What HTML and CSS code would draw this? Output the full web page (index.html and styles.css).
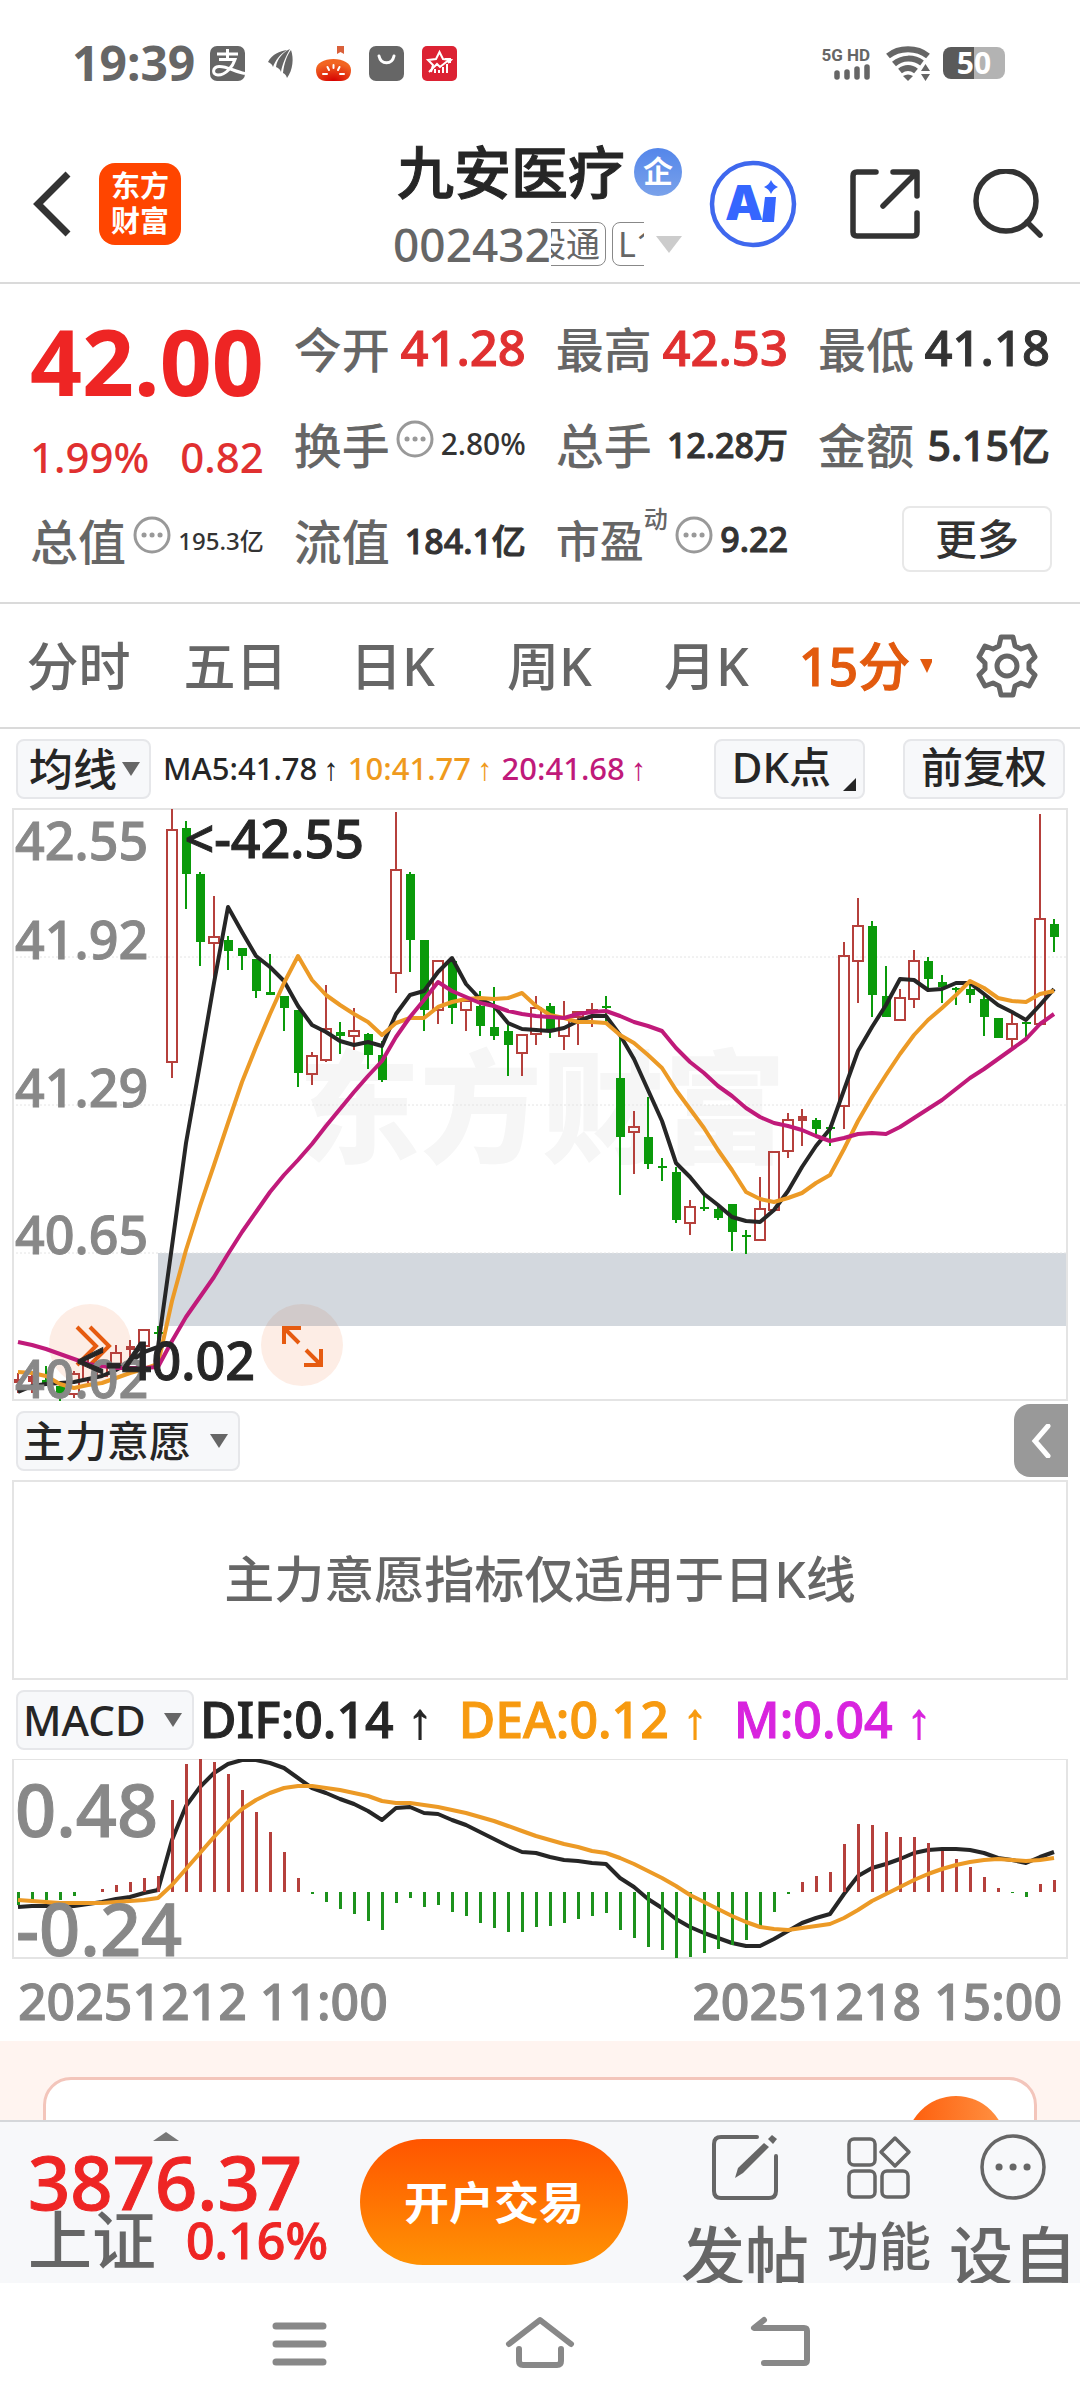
FILE: index.html
```html
<!DOCTYPE html>
<html lang="zh-CN">
<head>
<meta charset="utf-8">
<meta name="viewport" content="width=device-width, initial-scale=1">
<title>九安医疗 002432</title>
<link rel="stylesheet" href="styles.css">
</head>
<body>
<div class="status">
  <span class="clock">19:39</span>
  <svg class="s35" viewBox="0 0 35 35"><rect width="35" height="35" rx="7" fill="#666"/><path d="M7 8H28M17.500 3V13M9 13.500H25C23 20 16 29 8 29C2 29 2 21 9 20.500C17 20 25 26 35 27.500" fill="none" stroke="#fff" stroke-width="3"/></svg>
  <svg class="leaf" viewBox="0 0 26 35"><path d="M0 16C4 8 12 5 19 4C12 8 7 15 5 21C4 18 2 17 0 16ZM8 21C9 13 15 6 22 3C18 10 14 19 13 26C12 23 10 22 8 21ZM15 27C16 18 19 9 23 4C26 12 25 24 19 32C18 29 17 28 15 27Z" fill="#666"/></svg>
  <svg class="s35" viewBox="0 0 35 35"><defs><radialGradient id="pumpkin" cx=".5" cy="1" r=".8"><stop offset="0" stop-color="#d60000"/><stop offset="1" stop-color="#f26522"/></radialGradient></defs><path d="M21 0H28V8L24.500 6L21 8Z" fill="#d9603a"/><path d="M0 24C0 17 8 13 17.500 13S35 17 35 24C35 31 31 35 25 35H10C4 35 0 31 0 24Z" fill="url(#pumpkin)"/><path d="M17.500 19V22M11.500 21L13 24M23.500 21L22 24M7 28H11M28 28H24" stroke="#fff" stroke-width="2" stroke-linecap="round"/></svg>
  <svg class="s35" viewBox="0 0 35 35"><rect width="35" height="35" rx="7" fill="#666"/><path d="M10 10C12 19 23 19 25 10" fill="none" stroke="#fff" stroke-width="3" stroke-linecap="round"/></svg>
  <svg class="s35" viewBox="0 0 35 35"><rect width="35" height="35" rx="5" fill="#dc2233"/><path d="M9 26L11 19L6 14L14 13L17.500 6L21 13L29 14L26 17" fill="none" stroke="#fff" stroke-width="2"/><path d="M7 26L15 18L18 21L28 13M23 13H28V17M13 27V23M17 27V24M21 27V21M25 27V18" fill="none" stroke="#fff" stroke-width="2"/></svg>
  <span class="spacer"></span>
  <span class="signal"><b>5G HD</b><svg viewBox="0 0 36 16"><path d="M3 9V13M13 8V13M23 5V13M33 3V13" stroke="#666" stroke-width="5.500" stroke-linecap="round"/></svg></span>
  <svg class="wifi" viewBox="0 0 44 35"><g fill="none" stroke="#666" stroke-width="6"><path d="M2 10C13 1 31 1 42 10"/><path d="M8 18C16 11 28 11 36 17"/><path d="M14 25C19 21 25 21 30 25"/></g><path d="M17 30Q22 27 27 30L22 35Z" fill="#666"/><path d="M35 25L39.500 18L44 25ZM35 28H44L39.500 35Z" fill="#666"/></svg>
  <span class="battery">50</span>
</div>

<header class="head">
  <div class="head-left">
    <a href="#back" aria-label="返回"><svg class="back" viewBox="0 0 38 66"><path d="M35 3L5 33L35 63" fill="none" stroke="#333" stroke-width="7"/></svg></a>
    <a href="#home" class="brand">东方<br>财富</a>
  </div>
  <div class="title">
    <h1>九安医疗<span class="corp">企</span></h1>
    <div class="code"><span>002432</span><span class="tags"><span class="tag first">股通</span><span class="tag">L1</span></span><svg class="down" viewBox="0 0 26 17"><path d="M0 0H26L13 17Z" fill="#ccc"/></svg></div>
  </div>
  <div class="head-right">
    <button aria-label="Ai"><svg class="ai" viewBox="0 0 88 88"><circle cx="44" cy="44" r="41" fill="none" stroke="#3f68ee" stroke-width="4.500"/><text x="16" y="60" class="ai-text">A</text><path d="M56 37H67L65 62H53Z" fill="#3566ff"/><path d="M62 20Q64 25 69 27Q64 29 62 34Q60 29 55 27Q60 25 62 20Z" fill="#3566ff"/></svg></button>
    <button aria-label="分享"><svg class="share" viewBox="0 0 70 70"><path d="M26 3H7Q3 3 3 7V63Q3 67 7 67H63Q67 67 67 63V44M43 3H67V27M65 5L33 37" fill="none" stroke="#333" stroke-width="5.500" stroke-linecap="round" stroke-linejoin="round"/></svg></button>
    <button aria-label="搜索"><svg class="share" viewBox="0 0 70 70"><circle cx="33" cy="32" r="30" fill="none" stroke="#333" stroke-width="5.500"/><path d="M54 53L67 66" stroke="#333" stroke-width="5.500" stroke-linecap="round"/></svg></button>
  </div>
</header>

<section class="quote">
  <div class="last"><strong>42.00</strong><p><span>1.99%</span><span>0.82</span></p></div>
  <div class="cell"><span class="lab">今开</span><span class="v48 up">41.28</span></div>
  <div class="cell"><span class="lab">最高</span><span class="v48 up">42.53</span></div>
  <div class="cell"><span class="lab">最低</span><span class="v48">41.18</span></div>
  <div class="cell"><span class="lab">换手</span><svg class="dots" viewBox="0 0 38 38"><circle cx="19" cy="19" r="17" fill="none" stroke="#999" stroke-width="3"/><path d="M11 19h.1M19 19h.1M27 19h.1" stroke="#999" stroke-width="5" stroke-linecap="round"/></svg><span class="v30">2.80%</span></div>
  <div class="cell"><span class="lab">总手</span><span class="v34">12.28万</span></div>
  <div class="cell"><span class="lab">金额</span><span class="v40">5.15亿</span></div>
  <div class="cell"><span class="lab">总值</span><svg class="dots" viewBox="0 0 38 38"><circle cx="19" cy="19" r="17" fill="none" stroke="#999" stroke-width="3"/><path d="M11 19h.1M19 19h.1M27 19h.1" stroke="#999" stroke-width="5" stroke-linecap="round"/></svg><span class="v24">195.3亿</span></div>
  <div class="cell"><span class="lab">流值</span><span class="v34">184.1亿</span></div>
  <div class="cell"><span class="lab small">市盈<sup>动</sup></span><svg class="dots" viewBox="0 0 38 38"><circle cx="19" cy="19" r="17" fill="none" stroke="#999" stroke-width="3"/><path d="M11 19h.1M19 19h.1M27 19h.1" stroke="#999" stroke-width="5" stroke-linecap="round"/></svg><span class="v34">9.22</span></div>
  <div class="cell end"><button class="more">更多</button></div>
</section>

<nav class="periods">
  <a href="#m1">分时</a><a href="#d5">五日</a><a href="#day">日K</a><a href="#week">周K</a><a href="#month">月K</a>
  <a href="#m15" class="on">15分<svg viewBox="0 0 12 14"><path d="M0 0H12V3L7 14Z" fill="#e25a0e"/></svg></a>
  <button aria-label="设置"><svg class="gear" viewBox="-32 -32 64 64"><path d="M-8-20L-6-29H6L8-20L14-17L22-20L28-9L22-3V3L28 9L22 20L14 17L8 20L6 29H-6L-8 20L-14 17L-22 20L-28 9L-22 3V-3L-28-9L-22-20L-14-17Z" fill="none" stroke="#666" stroke-width="5" stroke-linejoin="round"/><circle r="10" fill="none" stroke="#666" stroke-width="5"/></svg></button>
</nav>

<div class="tools">
  <label class="pick tight"><select aria-label="主图指标"><option>均线</option></select><svg viewBox="0 0 18 14"><path d="M0 0H18L9 14Z"/></svg></label>
  <div class="ma"><span>MA5:41.78<i>↑</i></span><span class="c10">10:41.77<i>↑</i></span><span class="c20">20:41.68<i>↑</i></span></div>
  <button class="pill dk">DK点<svg viewBox="0 0 13 13"><path d="M13 0V13H0Z" fill="#262626"/></svg></button>
  <button class="pill">前复权</button>
</div>

<div class="chart">
  <svg id="kline" viewBox="12 807 1056 593" role="img" aria-label="15分钟K线"></svg>
  <button class="float f1" aria-label="展开"><svg viewBox="0 0 82 82"><path d="M28 23L47 42L28 61M41 23L60 42L41 61" fill="none" stroke="#e65b10" stroke-width="4"/></svg></button>
  <button class="float f2" aria-label="全屏"><svg viewBox="0 0 82 82"><path d="M23 40V24H40M24 25L38 39M43 61H60V45M59 60L45 46" fill="none" stroke="#e65b10" stroke-width="4"/></svg></button>
</div>

<div class="sub">
  <label class="pick"><select aria-label="副图指标一"><option>主力意愿</option></select><svg viewBox="0 0 18 14"><path d="M0 0H18L9 14Z"/></svg></label>
  <button class="fold" aria-label="收起"><svg viewBox="0 0 20 34"><path d="M17 2L4 17L17 32" fill="none" stroke="#fff" stroke-width="5" stroke-linecap="round"/></svg></button>
</div>
<p class="notice">主力意愿指标仅适用于日K线</p>

<div class="sub">
  <label class="pick"><select aria-label="副图指标二"><option>MACD</option></select><svg viewBox="0 0 18 14"><path d="M0 0H18L9 14Z"/></svg></label>
  <div class="macd"><span>DIF:0.14<i>↑</i></span><span class="dea">DEA:0.12<i>↑</i></span><span class="m">M:0.04<i>↑</i></span></div>
</div>
<div class="chart"><svg id="macd" viewBox="12 1758 1056 200" role="img" aria-label="MACD"></svg></div>
<div class="dates"><time>20251212 11:00</time><time>20251218 15:00</time></div>

<div class="promo"><div class="card"><span class="orb"></span></div></div>

<footer class="bar">
  <a href="#index" class="index"><svg viewBox="0 0 26 9"><path d="M0 9L13 0L26 9Z" fill="#777"/></svg><b>3876.37</b><span><em>上证</em>0.16%</span></a>
  <button class="trade">开户交易</button>
  <div class="acts">
    <a href="#post"><svg viewBox="0 0 66 66"><path d="M45 3H9Q2 3 2 10V57Q2 64 9 64H57Q64 64 64 57V22" fill="none" stroke="#666" stroke-width="4" stroke-linecap="round"/><path d="M23 44L26 34L52 9L57 13L31 39Z" fill="#666"/><path d="M56 5L60 1L65 5L61 10Z" fill="#666"/></svg>发帖</a>
    <a href="#tools" class="mid"><svg viewBox="0 0 66 66"><g fill="none" stroke="#666" stroke-width="3.500"><rect x="3" y="5" width="26" height="26" rx="5"/><rect x="3" y="37" width="26" height="26" rx="5"/><rect x="36" y="37" width="26" height="26" rx="5"/><path d="M49 4L63 18L49 32L35 18Z" stroke-linejoin="round"/></g></svg>功能</a>
    <a href="#fav"><svg viewBox="0 0 66 66"><circle cx="33" cy="33" r="31" fill="none" stroke="#666" stroke-width="3.500"/><path d="M19 33h.1M33 33h.1M47 33h.1" stroke="#666" stroke-width="7" stroke-linecap="round"/></svg>设自</a>
  </div>
</footer>
<nav class="keys">
  <button aria-label="任务"><svg viewBox="0 0 70 56"><path d="M11 11H58M11 29H58M11 47H58" stroke="#888" stroke-width="7" stroke-linecap="round"/></svg></button>
  <button aria-label="主页"><svg viewBox="0 0 70 56"><path d="M4 29L35 5L66 29M14 34V46Q14 50 18 50H52Q56 50 56 46V34" fill="none" stroke="#888" stroke-width="6" stroke-linecap="round" stroke-linejoin="round"/></svg></button>
  <button aria-label="后退"><svg viewBox="0 0 70 56"><path d="M19 5L9 13H59Q62 13 62 16V45Q62 48 59 48H19" fill="none" stroke="#888" stroke-width="6" stroke-linecap="round" stroke-linejoin="round"/></svg></button>
</nav>
<script src="charts.js"></script>
</body>
</html>
```
FILE: styles.css
```css
* { box-sizing: border-box; }
body { margin: 0; background: #fff; color: #262626; font-family: "Noto Sans", "Noto Sans CJK SC", sans-serif; font-weight: 500; }
a { color: inherit; text-decoration: none; }
button, select { font: inherit; color: inherit; background: none; border: 0; padding: 0; margin: 0; }
h1, p { margin: 0; font-weight: inherit; }
svg { display: block; flex: none; }
i, em { font-style: normal; }

/* medium weight for the large figures */
.title h1, .v48, .v40, .v34, .on, .macd, .dates, .index, .axis, .mark { -webkit-text-stroke: 1px; }

.status { display: flex; align-items: center; height: 126px; padding: 0 72px; color: #666; }
.clock { font-size: 48px; font-weight: 700; line-height: 48px; margin-right: 15px; }
.s35 { width: 35px; height: 35px; margin-right: 18px; }
.leaf { width: 26px; height: 35px; margin: 0 22px 0 5px; }
.spacer { flex: 1; }
.signal { display: flex; flex-direction: column; align-items: flex-end; margin-right: 16px; }
.signal b { font-family: "Roboto", sans-serif; font-size: 17px; line-height: 18px; }
.signal svg { width: 36px; height: 16px; }
.wifi { width: 44px; height: 35px; margin-right: 13px; }
.battery { width: 62px; height: 32px; margin-right: 3px; border-radius: 8px; background: linear-gradient(90deg, #5a5a5a 50%, #b3b3b3 50%); color: #fff; font-size: 30px; font-weight: 700; line-height: 32px; text-align: center; }

.head { display: grid; grid-template-columns: 1fr auto 1fr; align-items: center; height: 158px; padding-right: 5px; border-bottom: 2px solid #dadada; }
.head-left { display: flex; align-items: center; gap: 28px; padding-left: 33px; }
.back { width: 38px; height: 66px; }
.brand { width: 82px; height: 82px; padding-top: 5px; border-radius: 16px; background: #ff4500; color: #fff; font-size: 29px; font-weight: 700; line-height: 35px; text-align: center; }
.title { display: flex; flex-direction: column; gap: 12px; align-items: center; padding-bottom: 4px; }
.title h1 { display: flex; align-items: center; gap: 9px; font-size: 57px; line-height: 72px; padding-left: 4px; }
.corp { width: 48px; height: 48px; border-radius: 50%; background: linear-gradient(#5486ea, #7aa2ea); color: #fff; font-size: 30px; font-weight: 700; line-height: 46px; text-align: center; -webkit-text-stroke: 0; }
.code { display: flex; align-items: center; font-size: 46px; line-height: 48px; color: #666; }
.tags { display: flex; gap: 6px; width: 93px; overflow: hidden; }
.tag { flex: none; height: 44px; padding: 0 5px; border: 1px solid #888; border-radius: 8px; font-size: 34px; font-weight: 400; line-height: 42px; }
.tag.first { margin-left: -25px; }
.down { width: 26px; height: 17px; margin-left: 12px; }
.head-right { display: flex; align-items: center; justify-content: flex-end; gap: 53px; padding-right: 32px; }
.ai { width: 88px; height: 88px; }
.ai-text { font-family: "Inter", sans-serif; font-size: 48px; font-weight: 900; fill: #3566ff; }
.share { width: 70px; height: 70px; }

.quote { display: grid; grid-template-columns: repeat(4, 1fr); grid-auto-rows: 96px; column-gap: 30px; padding: 15px 30px 15px; border-bottom: 2px solid #dadada; color: #333; }
.last { grid-row: span 2; padding-top: 14px; color: #ee2524; }
.last strong { display: block; font-size: 91px; line-height: 96px; font-weight: 700; }
.last p { display: flex; justify-content: space-between; margin-top: 16px; font-size: 42px; line-height: 64px; color: #e03030; }
.cell { display: flex; align-items: center; justify-content: space-between; white-space: nowrap; }
.cell.end { justify-content: flex-end; margin-right: -2px; }
.lab { font-size: 48px; color: #666; }
.lab.small { display: flex; font-size: 44px; }
.lab sup { font-size: 24px; line-height: 24px; vertical-align: top; }
.dots { width: 38px; height: 38px; margin-bottom: 8px; }
.up { color: #e03030; }
.v48 { font-size: 49px; }
.v40 { font-size: 41px; }
.v34 { font-size: 34px; }
.v30 { font-size: 30px; }
.v24 { font-size: 24px; }
.more { width: 150px; height: 66px; border: 2px solid #e8e8e8; border-radius: 8px; font-size: 42px; line-height: 60px; }

.periods { display: grid; grid-template-columns: repeat(6, 1fr) 130px; align-items: center; justify-items: center; height: 125px; padding-right: 8px; border-bottom: 2px solid #dadada; color: #666; font-size: 52px; line-height: 64px; }
.periods .on { display: flex; align-items: center; gap: 10px; padding-left: 4px; color: #e25a0e; }
.periods .on svg { width: 12px; height: 14px; }
.gear { width: 64px; height: 64px; }

.tools { display: flex; align-items: center; height: 79px; padding: 0 15px 0 16px; }
.pick, .pill { display: flex; align-items: center; height: 60px; border: 2px solid #e6e7ea; border-radius: 8px; background: #f7f8fa; font-size: 42px; }
.pick { gap: 18px; padding: 0 10px 0 5px; }
.pick.tight { gap: 5px; padding: 0 9px 0 11px; font-size: 44px; }
.pick select { appearance: none; line-height: 56px; height: 56px; }
.pick svg { width: 18px; height: 14px; fill: #666; }
.pill { padding: 0 16px 4px; line-height: 52px; }
.pill.dk { gap: 12px; margin-left: auto; margin-right: 38px; padding: 0 7px 4px 16px; }
.pill.dk svg { width: 13px; height: 13px; align-self: flex-end; margin-bottom: 2px; }
.ma, .macd { display: flex; white-space: nowrap; }
.ma { gap: 9px; margin-left: 12px; font-size: 31px; line-height: 40px; }
.ma i, .macd i { font-family: "Liberation Sans", sans-serif; font-weight: 700; }
.ma i { margin-left: 6px; }
.c10 { color: #ef9a1d; }
.c20 { color: #c01a7a; }

.chart { position: relative; margin: 0 12px; }
.chart > svg { position: relative; z-index: 1; width: 100%; pointer-events: none; }
.float { position: absolute; bottom: 15px; width: 82px; height: 82px; border-radius: 50%; background: rgba(240, 110, 40, .12); }
.f1 { left: 37px; }
.f2 { left: 249px; }
.axis { font-size: 52px; fill: #888; stroke: #888; }
.mark { font-size: 52px; fill: #262626; stroke: #262626; }
.axis.big { font-size: 72px; }
.water { font-size: 122px; font-weight: 900; fill: #f6f6f6; }

.sub { display: flex; align-items: center; height: 79px; padding-left: 16px; }
.fold { display: flex; align-items: center; justify-content: center; width: 54px; height: 73px; margin-left: auto; margin-right: 12px; border-radius: 16px 0 0 16px; background: #999; }
.fold svg { width: 20px; height: 34px; }
.notice { margin: 0 12px; height: 200px; border: 2px solid #e4e4e4; color: #666; font-size: 50px; line-height: 194px; text-align: center; }
.macd { gap: 26px; margin-left: 6px; font-size: 50px; line-height: 60px; }
.macd i { margin-left: 14px; }
.dea { color: #f79a10; }
.m { color: #d824de; }
.dates { display: flex; justify-content: space-between; height: 82px; padding: 0 18px; color: #888; font-size: 50px; line-height: 84px; }

.promo { height: 79px; padding: 36px 43px 0; overflow: hidden; background: #fff4f0; }
.card { display: flex; justify-content: flex-end; height: 160px; padding: 16px 28px; border: 3px solid #f3c5bb; border-radius: 28px; background: #fff; }
.orb { width: 100px; height: 100px; border-radius: 50%; background: linear-gradient(90deg, #fe5c0a, #ff9344); }

.bar { display: flex; height: 163px; padding-left: 28px; overflow: hidden; border-top: 2px solid #d5d7da; background: #f7f8fa; }
.index { display: flex; flex-direction: column; width: 298px; margin-right: 34px; color: #ee2524; }
.index svg { width: 26px; height: 9px; margin: 10px 0 8px 125px; }
.index b { font-size: 74px; font-weight: 500; line-height: 66px; }
.index span { display: flex; align-items: center; gap: 30px; font-size: 50px; line-height: 50px; white-space: nowrap; }
.index em { font-size: 64px; color: #666; -webkit-text-stroke: 0; }
.trade { width: 268px; height: 126px; margin-top: 17px; border-radius: 63px; background: linear-gradient(#ff5500, #ff9204); color: #fff; font-size: 45px; font-weight: 700; padding-bottom: 4px; }
.acts { display: grid; grid-template-columns: repeat(3, 134px); margin-left: auto; color: #666; font-size: 64px; line-height: 84px; white-space: nowrap; }
.acts a { display: flex; flex-direction: column; align-items: center; }
.acts svg { width: 66px; height: 66px; margin: 12px 0 14px; }
.acts .mid { font-size: 52px; line-height: 64px; }
.keys { display: flex; justify-content: center; gap: 170px; height: 126px; padding-top: 32px; align-items: flex-start; }
.keys svg { width: 70px; height: 56px; }
```
FILE: charts.js
```js
const NS = "http://www.w3.org/2000/svg";
const x = i => 18 + 14 * i;
const RED = "#b5403c", GREEN = "#0a9a0a", DARK = "#262626", ORANGE = "#ec9a26", PURPLE = "#c01a7a";

function add(svg, name, attrs, text) {
  const el = document.createElementNS(NS, name);
  for (const k in attrs) el.setAttribute(k, attrs[k]);
  if (text) el.textContent = text;
  svg.appendChild(el);
}
function line(svg, ys, color) {
  add(svg, "polyline", { points: ys.map((y, i) => x(i) + "," + y).join(" "), fill: "none", stroke: color, "stroke-width": 4, "stroke-linejoin": "round" });
}

// Each bar: kind (r hollow, R solid red, g green), high, body top, body bottom, low
const bars = `R 1372 1378 1382 1392|R 1372 1375 1381 1392|g 1365 1379 1383 1384|g 1380 1385 1393 1400|r 1370 1373 1393 1397|r 1357 1363 1379 1382|r 1361 1361 1375 1375|r 1344 1352 1364 1368|R 1339 1345 1349 1356|r 1329 1329 1345 1345|g 1325 1331 1333 1338|r 808 829 1061 1077|g 820 827 873 908|g 871 873 941 965|r 895 936 942 976|g 935 939 950 969|g 947 947 955 969|g 958 958 990 997|g 953 991 994 994|g 995 995 1007 1030|g 1009 1009 1072 1086|r 1051 1055 1073 1084|r 984 1028 1059 1061|g 1021 1031 1035 1053|r 1007 1030 1035 1049|g 1032 1033 1054 1068|g 1040 1054 1079 1081|r 811 869 972 992|g 871 873 939 971|g 939 939 1009 1030|r 960 960 1009 1023|g 960 960 1007 1023|r 1000 1000 1009 1030|g 990 1005 1025 1035|g 986 1026 1035 1039|g 1023 1030 1044 1075|r 1033 1034 1052 1075|r 995 1007 1033 1044|g 1002 1005 1029 1037|r 1000 1017 1035 1049|r 1011 1011 1016 1044|r 1002 1009 1011 1026|g 995 1005 1007 1021|g 1035 1077 1136 1194|r 1110 1126 1131 1173|g 1096 1136 1163 1168|g 1157 1165 1167 1180|g 1166 1171 1219 1222|r 1199 1206 1222 1234|g 1193 1206 1208 1210|g 1203 1208 1217 1219|g 1203 1203 1231 1250|g 1229 1234 1236 1253|r 1176 1208 1239 1239|r 1150 1151 1209 1209|r 1112 1119 1150 1157|R 1108 1115 1120 1145|g 1117 1119 1128 1135|g 1124 1126 1128 1145|r 941 955 1105 1128|r 897 925 960 1002|g 920 925 994 1016|g 965 995 1016 1016|r 988 997 1019 1019|r 949 960 998 1007|g 956 960 978 988|g 974 981 986 1002|g 986 987 988 1004|g 984 988 994 1002|g 994 998 1016 1035|g 1017 1017 1037 1037|r 1011 1023 1038 1047|g 1021 1021 1023 1039|r 813 918 1023 1023|g 918 923 936 951`;
const ma5 = [1391,1385,1383,1382,1381,1378,1375,1369,1361,1351,1346,1245,1142,1063,982,906,931,955,966,980,1005,1024,1031,1040,1044,1041,1045,1013,994,990,971,957,983,998,1005,1022,1028,1029,1030,1027,1020,1015,1015,1034,1058,1089,1120,1162,1176,1193,1204,1216,1220,1221,1209,1190,1166,1145,1128,1089,1050,1026,1004,978,979,989,988,982,982,993,1004,1011,1019,1004,988];
const ma10 = [1371,1372,1375,1383,1387,1384,1382,1377,1372,1368,1363,1300,1249,1205,1164,1122,1081,1046,1013,982,955,979,994,1004,1013,1021,1034,1022,1017,1017,1006,1001,998,997,998,997,992,1005,1014,1017,1021,1021,1022,1034,1042,1054,1067,1089,1108,1127,1149,1169,1191,1198,1201,1197,1192,1182,1174,1148,1120,1096,1074,1053,1034,1019,1007,994,980,987,997,1000,1001,993,990];
const ma20 = [1341,1344,1348,1353,1358,1363,1365,1367,1367,1367,1366,1340,1316,1296,1276,1253,1231,1211,1191,1174,1159,1143,1125,1108,1091,1075,1060,1036,1016,999,981,990,996,1002,1005,1010,1013,1015,1016,1017,1013,1011,1010,1015,1021,1025,1030,1047,1061,1072,1085,1095,1107,1116,1122,1125,1129,1135,1140,1137,1133,1132,1133,1126,1117,1108,1099,1088,1077,1068,1058,1048,1038,1023,1013];

const k = document.getElementById("kline");
add(k, "text", { x: 298, y: 1152, class: "water" }, "东方财富");
add(k, "rect", { x: 158, y: 1252, width: 909, height: 73, fill: "rgba(73, 91, 115, .24)" });
for (const y of [956, 1104, 1252]) add(k, "line", { x1: 12, x2: 1067, y1: y, y2: y, stroke: "#e4e4e4", "stroke-width": 1, "stroke-dasharray": "2 2" });
add(k, "rect", { x: 13, y: 808, width: 1054, height: 591, fill: "none", stroke: "#e4e4e4", "stroke-width": 2 });
bars.split("|").forEach((row, i) => {
  const [kind, ...n] = row.split(" ");
  const [high, top, bottom, low] = n.map(Number);
  const color = kind === "g" ? GREEN : RED;
  if (top > high) add(k, "rect", { x: x(i) - 1, y: high, width: 2, height: top - high, fill: color });
  if (low > bottom) add(k, "rect", { x: x(i) - 1, y: bottom, width: 2, height: low - bottom, fill: color });
  if (kind === "r") add(k, "rect", { x: x(i) - 5, y: top, width: 10, height: bottom - top, fill: "none", stroke: color, "stroke-width": 2 });
  else add(k, "rect", { x: x(i) - 4, y: top, width: 9, height: Math.max(2, bottom - top), fill: color });
});
line(k, ma5, DARK);
line(k, ma10, ORANGE);
line(k, ma20, PURPLE);
[["42.55", 859], ["41.92", 958], ["41.29", 1106], ["40.65", 1253], ["40.02", 1397]].forEach(([t, y]) => add(k, "text", { x: 15, y, class: "axis" }, t));
add(k, "text", { x: 364, y: 857, class: "mark", "text-anchor": "end" }, "<-42.55");
add(k, "text", { x: 255, y: 1379, class: "mark", "text-anchor": "end" }, "<-40.02");

const hist = [1904,1901,1899,1899,1895,1891,1888,1884,1881,1877,1875,1799,1763,1758,1761,1773,1789,1811,1831,1851,1877,1893,1901,1908,1913,1920,1929,1902,1897,1906,1904,1911,1915,1922,1927,1931,1931,1926,1925,1922,1918,1915,1912,1929,1937,1946,1949,1957,1956,1952,1948,1944,1939,1927,1911,1893,1881,1875,1871,1843,1823,1824,1831,1836,1836,1842,1850,1858,1866,1876,1887,1892,1896,1883,1879];
const dif = [1906,1905,1905,1906,1905,1903,1901,1898,1896,1892,1889,1839,1805,1786,1772,1763,1759,1759,1762,1767,1777,1787,1792,1798,1803,1810,1819,1807,1806,1812,1813,1819,1824,1831,1838,1845,1851,1852,1856,1859,1860,1862,1863,1877,1886,1898,1907,1918,1926,1932,1937,1942,1945,1945,1938,1930,1922,1917,1913,1893,1875,1867,1863,1858,1852,1849,1848,1848,1849,1852,1857,1859,1862,1856,1851];
const dea = [1899,1900,1901,1902,1902,1902,1902,1901,1900,1899,1897,1884,1868,1852,1836,1821,1808,1799,1792,1787,1785,1785,1787,1789,1792,1795,1800,1802,1802,1804,1806,1809,1812,1816,1820,1825,1830,1835,1839,1843,1846,1850,1852,1857,1863,1870,1877,1885,1894,1901,1908,1915,1921,1926,1928,1929,1927,1925,1923,1917,1909,1900,1893,1886,1879,1873,1868,1864,1861,1859,1858,1859,1860,1859,1857];
const m = document.getElementById("macd");
add(m, "rect", { x: 13, y: 1758, width: 1054, height: 199, fill: "none", stroke: "#e4e4e4", "stroke-width": 2 });
line(m, dif, DARK);
hist.forEach((y, i) => add(m, "rect", { x: x(i) - 1, y: Math.min(y, 1891), width: 3, height: Math.abs(y - 1891), fill: y > 1891 ? "#1c921c" : RED }));
line(m, dea, ORANGE);
add(m, "text", { x: 15, y: 1836, class: "axis big" }, "0.48");
add(m, "text", { x: 16, y: 1955, class: "axis big" }, "-0.24");
```
